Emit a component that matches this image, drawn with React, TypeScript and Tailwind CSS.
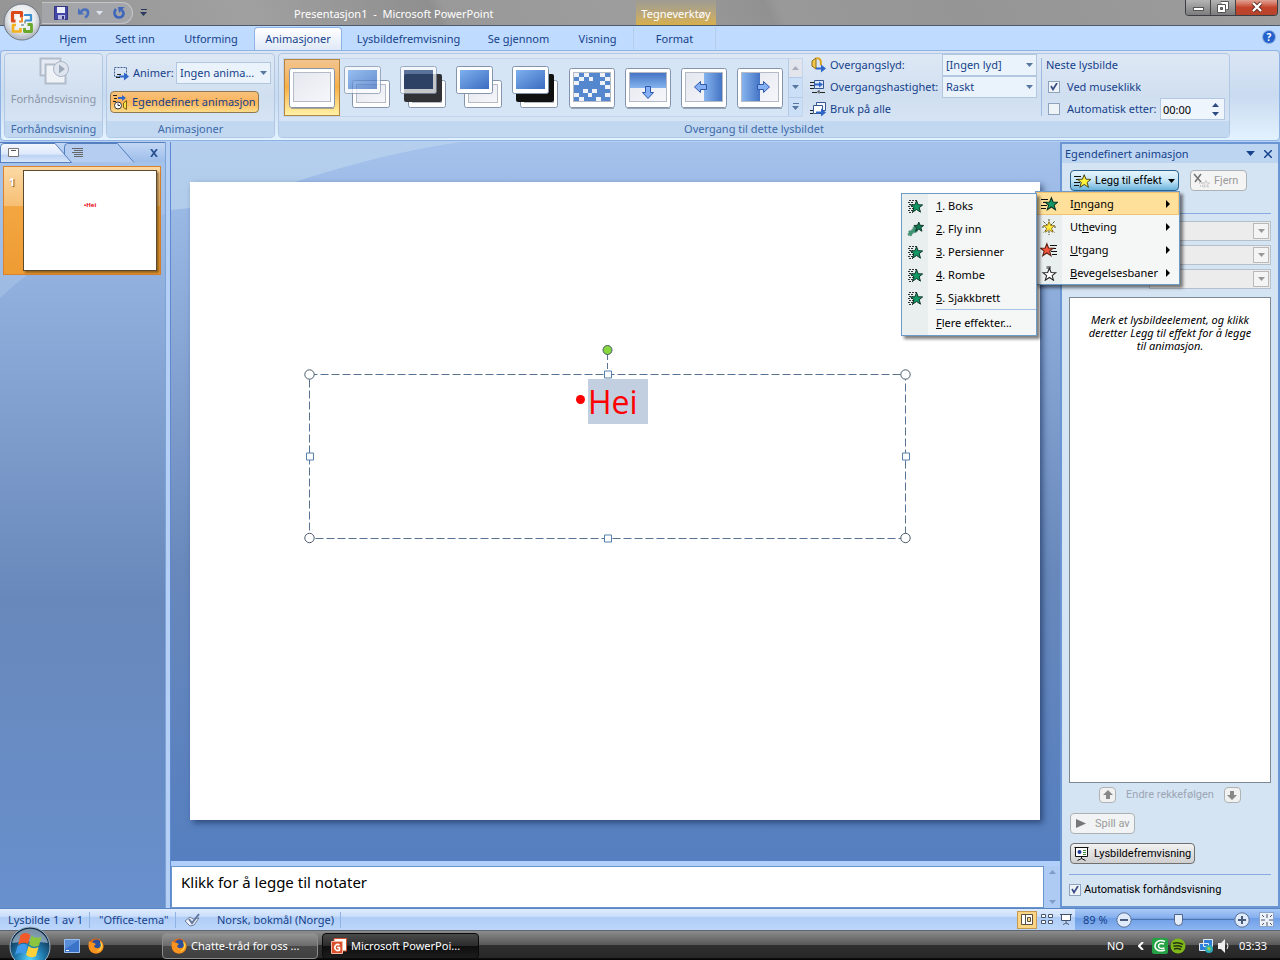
import React from 'react';

const tabs = [
  { label: 'Hjem', width: 'w-[50px]' },
  { label: 'Sett inn', width: 'w-[66px]' },
  { label: 'Utforming', width: 'w-[78px]' },
  { label: 'Animasjoner', width: 'w-[88px]', active: true },
  { label: 'Lysbildefremvisning', width: 'w-[125px]' },
  { label: 'Se gjennom', width: 'w-[87px]' },
  { label: 'Visning', width: 'w-[63px]' },
  { label: 'Format', width: 'w-[83px]', context: true },
];

const STAR = '8,0.8 10,5.8 15.4,6 11.2,9.4 12.8,14.8 8,11.6 3.2,14.8 4.8,9.4 0.6,6 6,5.8';

type IconProps = { className?: string };

function MenuStar({ kind }: { kind: string }) {
  return (
    <svg className="h-4 w-[18px] shrink-0" viewBox="0 0 18 16" aria-hidden="true">
      {(kind === 'entrance' || kind === 'add') && <path d="M1 3.5h7M3 6.5h4M1 9.5h6M1 12.5h5" stroke="#111" />}
      {kind === 'box' && (
        <path d="M3 2.500h8M2 4.500h6M3 6.500h4M2 8.500h6M3 10.500h5M2 12.500h5M3 14.500h4" stroke="#333" strokeDasharray="2 1" />
      )}
      {kind === 'entrance' && <polygon points={STAR} transform="translate(4.5 1) scale(.86)" fill="#129a66" stroke="#0c3324" strokeWidth="1.2" />}
      {kind === 'box' && <polygon points={STAR} transform="translate(4 2) scale(.82)" fill="#129a66" stroke="#0c3324" strokeWidth="1.2" />}
      {kind === 'add' && <polygon points={STAR} transform="translate(4 1) scale(.9)" fill="#fff23a" stroke="#3c3610" />}
      {kind === 'fly' && (
        <g>
          <path d="M2 14l1-4 3-1 2-4 4 2-1 4-4 1-2 3z" fill="#3c9673" stroke="#6b8f80" strokeDasharray="2 1" />
          <polygon points={STAR} transform="translate(7.5 0.5) scale(.66)" fill="#127a52" stroke="#0c3324" strokeWidth="1.4" />
        </g>
      )}
      {kind === 'emphasis' && (
        <g>
          <path d="M9 0v16M2 8h14M3.5 2.5l11 11M14.5 2.5l-11 11" stroke="#4a4a20" strokeDasharray="2 1" />
          <polygon points={STAR} transform="translate(3 2) scale(.76)" fill="#ffe93a" stroke="#8a6810" />
        </g>
      )}
      {kind === 'exit' && (
        <g>
          <path d="M10 3.5h7M12 6.5h4M11 9.5h6M12 12.5h5" stroke="#111" />
          <polygon points={STAR} transform="translate(0 1) scale(.86)" fill="#f2553a" stroke="#5b2012" strokeWidth="1.2" />
        </g>
      )}
      {kind === 'path' && (
        <g>
          <path d="M8 4V2.500h3" stroke="#888" strokeWidth="3" fill="none" />
          <polygon points={STAR} transform="translate(2.5 2.5) scale(.86)" fill="#fff" stroke="#222" strokeWidth="1.2" />
        </g>
      )}
    </svg>
  );
}

function OfficeLogo() {
  return (
    <svg className="h-full w-full" viewBox="0 0 38 38" aria-hidden="true">
      <defs>
        <radialGradient id="orb" cx=".5" cy=".4" r=".65">
          <stop offset="0" stopColor="#fff" />
          <stop offset=".55" stopColor="#e9ebee" />
          <stop offset=".85" stopColor="#b4bac3" />
          <stop offset="1" stopColor="#eef1f4" />
        </radialGradient>
      </defs>
      <circle cx="19" cy="19" r="18" fill="url(#orb)" stroke="#6c737d" />
      <g fill="none" strokeLinejoin="round">
        <path d="M12.500 18H9.500V9.500h9v5" stroke="#dc4a1c" strokeWidth="3.200" />
        <path d="M16 18.500h3v-4" stroke="#f28c2a" strokeWidth="2" />
        <path d="M22 13v-1h6v5.500h-6" stroke="#3d8fd0" strokeWidth="2.200" />
        <path d="M13 22h-3v6.500h7.500V25" stroke="#f3b11a" strokeWidth="2.600" />
        <path d="M21.500 25v3.500h7V21.500h-4" stroke="#6aa82c" strokeWidth="2.800" />
        <path d="M18 22h3M22 17.500v3" stroke="#7a9a9a" strokeWidth="1.600" />
      </g>
    </svg>
  );
}

function Thumb({ kind }: { kind: string }) {
  return (
    <svg className="h-14 w-14 shrink-0" viewBox="0 0 56 56" aria-hidden="true">
      <defs>
        <linearGradient id="tblue" x1="0" y1="0" x2="1" y2="1">
          <stop offset="0" stopColor="#7fb0ee" />
          <stop offset="1" stopColor="#3a6cc0" />
        </linearGradient>
        <linearGradient id="tgrey" x1="0" y1="0" x2="1" y2="1">
          <stop offset="0" stopColor="#e4e7ee" />
          <stop offset="1" stopColor="#f6f7fb" />
        </linearGradient>
        <linearGradient id="tdown" x1="0" y1="0" x2="0" y2="1">
          <stop offset="0" stopColor="#4474c4" />
          <stop offset="1" stopColor="#86b4ef" />
        </linearGradient>
        <linearGradient id="tright" x1="0" y1="0" x2="1" y2="0">
          <stop offset="0" stopColor="#86b4ef" />
          <stop offset="1" stopColor="#4474c4" />
        </linearGradient>
      </defs>
      {['none', 'checker', 'down', 'left', 'right'].includes(kind) ? (
        <g>
          <rect x="5.5" y="8.5" width="45" height="39" rx="2" fill="#fff" stroke="#8494ab" />
          <path d="M7 48.5h43" stroke="#5c6675" opacity=".5" />
          <rect x="9.5" y="12.5" width="37" height="29" fill="url(#tgrey)" stroke="#b4bac6" />
        </g>
      ) : (
        <g>
          <rect x="12.5" y="20.5" width="37" height="27" rx="2" fill="#fff" stroke="#8494ab" />
          <rect x="16.5" y="24.5" width="29" height="18" fill="url(#tgrey)" stroke="#b4bac6" />
          {kind === 'fadeBlack' && <rect x="8" y="14" width="38" height="28" rx="2" fill="#303236" />}
          {kind === 'cutBlack' && <rect x="8" y="14" width="38" height="28" rx="2" fill="#111" />}
          <g opacity={kind === 'fade' || kind === 'fadeBlack' ? 0.72 : 1}>
            <rect x="4.5" y="6.5" width="36" height="27" rx="2" fill="#fff" stroke="#8494ab" />
            <rect x="8" y="10" width="29" height="19" fill={kind === 'fadeBlack' ? '#2d4878' : 'url(#tblue)'} />
          </g>
        </g>
      )}
      {kind === 'checker' && (
        <g>
          <rect x="10" y="13" width="36" height="28" fill="#5587cf" />
          <path
            d="M10 13h5v4h-5zM20 13h5v4h-5zM36 13h5v4h-5zM15 17h5v4h-5zM41 17h5v4h-5zM25 17h4v4h-4zM10 21h5v4h-5zM36 21h5v4h-5zM41 25h5v4h-5zM19 29h5v4h-5zM28 29h5v4h-5zM10 33h5v4h-5zM41 33h5v4h-5zM24 33h4v4h-4zM15 37h5v4h-5zM32 37h5v4h-5z"
            fill="#eef2f8"
          />
        </g>
      )}
      {kind === 'down' && (
        <g>
          <rect x="10" y="13" width="36" height="15" fill="url(#tdown)" />
          <path d="M25.5 26.5h5v6h3l-5.5 6-5.5-6h3z" fill="#85b1f4" stroke="#2f57ad" />
        </g>
      )}
      {kind === 'left' && (
        <g>
          <rect x="28" y="13" width="18" height="28" fill="url(#tright)" />
          <path d="M30.500 24.5v5h-6v3l-6-5.500 6-5.500v3z" fill="#85b1f4" stroke="#2f57ad" />
        </g>
      )}
      {kind === 'right' && (
        <g>
          <rect x="10" y="13" width="18" height="28" fill="url(#tright)" />
          <path d="M25.500 24.5v5h6v3l6-5.500-6-5.500v3z" fill="#85b1f4" stroke="#2f57ad" />
        </g>
      )}
    </svg>
  );
}

function Firefox() {
  return (
    <svg className="h-4 w-4 shrink-0" viewBox="0 0 16 16" aria-hidden="true">
      <circle cx="8" cy="8" r="7.5" fill="#e66a10" />
      <circle cx="8.5" cy="6.500" r="5" fill="#2c4f9c" />
      <path d="M1 3c1 1 2 1.500 4 1.500l3 1.500-2 2c1 3 5 3 7 0 .5-2 0-4-1-5 3 1.500 4.500 6 2.500 9-3 5-11 4.500-13-.5C.5 9 .5 6 1 3z" fill="#f7931e" />
      <path d="M12 3c2.500 2 3 5 1.500 7.500-1 2-3 3-5 2.800 3-1.300 4.500-3 4.300-6z" fill="#ffd84a" />
    </svg>
  );
}

function Caret({ className = '' }: IconProps) {
  return (
    <svg className={`h-1 w-[7px] ${className}`} viewBox="0 0 7 4" aria-hidden="true">
      <path d="M0 0h7L3.5 4z" fill="currentColor" />
    </svg>
  );
}

function CheckBox({ checked = false }: { checked?: boolean }) {
  return (
    <span className="relative flex h-3 w-3 shrink-0">
      <input type="checkbox" defaultChecked={checked} className="peer h-3 w-3 appearance-none border border-[#8ea2bd] bg-[#eef3f8]" />
      <svg className="pointer-events-none absolute left-[2px] top-[2px] hidden h-2 w-2 peer-checked:block" viewBox="0 0 8 8" aria-hidden="true">
        <path d="M1 3l2 3.5L7 0" stroke="#3a4c86" strokeWidth="1.700" fill="none" />
      </svg>
    </span>
  );
}

function TitleBar() {
  return (
    <header className="relative flex h-[26px] shrink-0 items-center border-b border-[#4d5a6b] bg-[linear-gradient(65deg,#959595_0%,#a0a0a0_20%,#8f8f8f_34%,#999_35%,#9d9d9d_50%,#919191_60%,#999_61%,#959595_75%,#9c9c9c_100%)] pl-[42px]">
      <div className="flex h-[22px] w-[91px] shrink-0 items-center gap-[10px] rounded-r-full border border-l-0 border-[#c4c5c7] bg-[#a4a5a8] pl-3">
        <button aria-label="Lagre">
          <svg className="h-[14px] w-[14px]" viewBox="0 0 14 14">
            <path d="M.5.5h13v13H.5z" fill="#4448a8" stroke="#34357f" />
            <path d="M3 1h8v6H3z" fill="#eef0fb" />
            <path d="M4 9h7v4.500H4z" fill="#b9bce6" />
            <path d="M8 10h2v3H8z" fill="#33347c" />
          </svg>
        </button>
        <button aria-label="Angre" className="flex items-center gap-[6px]">
          <svg className="h-3 w-3" viewBox="0 0 12 12">
            <path d="M3 5c2-4 7.500-3 7 1 0 2-1 3.500-3 4.500" stroke="#4a70bd" strokeWidth="2.600" fill="none" />
            <path d="M0 1v6.500h6z" fill="#4a70bd" />
          </svg>
          <Caret className="w-[5px] text-[#dfe6f2]" />
        </button>
        <button aria-label="Gjenta">
          <svg className="h-3 w-3" viewBox="0 0 12 12">
            <path d="M3 2c-3 4-1 8.500 3 8.500 4.500 0 6-5 2.500-7.500" stroke="#3d66ba" strokeWidth="2.600" fill="none" />
            <path d="M5 0h6.500L6 6z" fill="#3d66ba" />
          </svg>
        </button>
      </div>
      <button aria-label="Tilpass" className="ml-[7px] flex flex-col items-center gap-[2px] text-[#2b3a5c]">
        <span className="h-px w-[6px] bg-[#2b3a5c]" />
        <Caret className="w-[5px]" />
      </button>
      <h1 className="ml-[147px] flex-1 pt-[2px] text-white">Presentasjon1 &nbsp;-&nbsp; Microsoft PowerPoint</h1>
      <div className="absolute left-[636px] top-0 flex h-[25px] w-20 items-center justify-center bg-linear-to-b from-[#9e9b92] via-[#b8a67a] to-[#d8b049] pt-[3px] text-white">
        Tegneverktøy
      </div>
      <div className="mb-[10px] mr-[2px] flex h-4 w-[93px] shrink-0 overflow-hidden rounded-b border border-t-0 border-[#3b3f45]">
        <button aria-label="Minimer" className="flex w-[25px] items-center justify-center border-r border-[#444] bg-linear-to-b from-[#b4b4b4] to-[#7c7c7c]">
          <span className="mt-1 h-[4px] w-[11px] border border-[#555] bg-white" />
        </button>
        <button aria-label="Gjenopprett" className="flex w-[25px] items-center justify-center border-r border-[#444] bg-linear-to-b from-[#b4b4b4] to-[#7c7c7c]">
          <svg className="h-3 w-3" viewBox="0 0 12 12">
            <path d="M3.5.5h8v8h-2M.5 3.5h8v8h-8z" fill="#fff" stroke="#555" />
            <path d="M3.5 6.500h2v2h-2z" fill="#777" stroke="#555" />
          </svg>
        </button>
        <button aria-label="Lukk" className="flex flex-1 items-center justify-center bg-linear-to-b from-[#e0a294] via-[#c4432a] to-[#b4442c]">
          <svg className="h-3 w-3" viewBox="0 0 12 12">
            <path d="M2 2l8 8M10 2l-8 8" stroke="#5c2a20" strokeWidth="4" />
            <path d="M2 2l8 8M10 2l-8 8" stroke="#fff" strokeWidth="2.400" />
          </svg>
        </button>
      </div>
      <button aria-label="Office-knapp" className="absolute left-[3px] top-[3px] z-10 h-[38px] w-[38px]">
        <OfficeLogo />
      </button>
    </header>
  );
}

function TabRow() {
  return (
    <nav className="flex h-6 shrink-0 items-end gap-1 bg-[#bfdbff] pl-12 pr-1 text-[#15428b]">
      {tabs.map((tab) => (
        <button
          key={tab.label}
          className={`${tab.width} h-[23px] shrink-0 ${
            tab.active ? 'z-10 rounded-t border border-b-0 border-[#8db2e3] bg-linear-to-b from-white to-[#dfe9f7]' : ''
          } ${tab.context ? 'border-x border-[#b4cdea]' : ''}`}
        >
          {tab.label}
        </button>
      ))}
      <button aria-label="Hjelp" className="mb-[7px] ml-auto mr-px flex h-3 w-3 items-center justify-center rounded-full bg-[#2461cc] text-[10px] font-bold text-white ring-1 ring-[#8aaee0]">
        ?
      </button>
    </nav>
  );
}

function Group({ label, className, children }: { label: string; className: string; children: React.ReactNode }) {
  return (
    <section className={`flex shrink-0 flex-col overflow-hidden rounded-sm border border-[#b0c8e4] bg-linear-to-b from-[#dee8f5] via-[#d0dff0] to-[#d9e7f8] ${className}`}>
      <div className="min-h-0 flex-1">{children}</div>
      <h2 className="h-4 bg-[#c1d8f0] text-center leading-4 text-[#3e6aaa]">{label}</h2>
    </section>
  );
}

function RibbonSelect({ label, value, className }: { label: string; value: string; className: string }) {
  return (
    <span className={`relative flex h-[22px] items-center ${className}`}>
      <select aria-label={label} className="h-full w-full appearance-none border border-[#b3c7e1] bg-[#eaf2fb] pl-[3px] text-[#15428b]">
        <option>{value}</option>
      </select>
      <Caret className="pointer-events-none absolute right-1 w-[5px] text-[#5577a0]" />
    </span>
  );
}

function ArrowPageIcon({ kind }: { kind: string }) {
  return (
    <svg className="h-4 w-4 shrink-0" viewBox="0 0 16 16" aria-hidden="true">
      {kind === 'animate' && <path d="M1.5 2.5h12v9h-12z" fill="none" stroke="#3c5f94" strokeDasharray="2 1" />}
      {kind === 'sound' && (
        <g>
          <path d="M2 4l4-3v11L2 9z" fill="#f2c94c" stroke="#8a6a14" />
          <path d="M6 1.500c4-1 5 1 5 7" fill="none" stroke="#e0a520" strokeWidth="2" />
        </g>
      )}
      {kind === 'speed' && (
        <g>
          <path d="M4.5 1.5h9v8h-9z" fill="#dce8f8" stroke="#34588f" />
          <path d="M0 3.5h4M0 6.500h4M0 9.500h4M2 13.5h5l2-2v3M10 13.5h5" stroke="#222" fill="none" />
        </g>
      )}
      {kind === 'all' && (
        <g>
          <path d="M6.500 1.500h9v8h-9z" fill="#f2f6fc" stroke="#34588f" />
          <path d="M3.500 4.500h9v8h-9z" fill="#fff" stroke="#34588f" />
          <path d="M0 9.500h3M0 12.500h3" stroke="#222" />
        </g>
      )}
      {kind === 'speed' ? (
        <path d="M5 4.500h4v-2l4 3-4 3v-2H5z" fill="#2f66c8" />
      ) : (
        <path d="M6 10.500h5v-3l5 4-5 4v-3H6z" fill="#2f66c8" />
      )}
      {kind === 'animate' && <path d="M4 9.500h4M3 12.500h4" stroke="#222" />}
    </svg>
  );
}

const transitions = ['none', 'fade', 'fadeBlack', 'cut', 'cutBlack', 'checker', 'down', 'left', 'right'];

function Ribbon() {
  return (
    <div className="flex h-[91px] shrink-0 gap-[3px] rounded border border-[#8db2e3] bg-linear-to-b from-[#dbe6f4] via-[#c9dbf0] to-[#e3f2ff] px-[3px] py-[2px] text-[#15428b]">
      <Group label="Forhåndsvisning" className="w-[99px]">
        <button disabled className="flex h-full w-full flex-col items-center pt-[2px] text-[#8d96a8]">
          <svg className="h-8 w-8" viewBox="0 0 32 32" aria-hidden="true">
            <path d="M2.500 2.500h20v17h-20z" fill="#e6ebf3" stroke="#b2bccb" strokeWidth="2" />
            <path d="M7.500 8.500h20v19h-20z" fill="#eff2f7" stroke="#b2bccb" strokeWidth="2" />
            <circle cx="23" cy="13" r="7.500" fill="#dfe5ee" stroke="#aab4c4" />
            <path d="M21 8.500v9l6-4.500z" fill="#9ea9ba" />
          </svg>
          <span className="mt-[3px]">Forhåndsvisning</span>
        </button>
      </Group>
      <Group label="Animasjoner" className="w-[169px]">
        <div className="flex flex-col gap-[7px] px-[3px] pt-[8px]">
          <div className="flex items-center">
            <span className="ml-[3px]"><ArrowPageIcon kind="animate" /></span>
            <span className="ml-[4px] flex-1">Animer:</span>
            <RibbonSelect label="Animer" value="Ingen anima..." className="w-[95px]" />
          </div>
          <button className="flex h-[22px] w-[149px] items-center gap-[3px] rounded-sm border border-[#8e7a52] bg-linear-to-b from-[#f7c27c] via-[#fcb45a] to-[#fddb87] px-[2px] whitespace-nowrap">
            <svg className="h-4 w-4 shrink-0" viewBox="0 0 16 16" aria-hidden="true">
              <path d="M0 1.500h4M1 4.500h3M0 7.500h3" stroke="#222" />
              <path d="M5 3h4V1l4 3-4 3V5H5z" fill="#2f66c8" />
              <circle cx="5" cy="11.500" r="3.500" fill="#fff" stroke="#333" />
              <path d="M5 9.500v2h2" stroke="#333" fill="none" />
              <path d="M10.500 9l3-2.500v9l-3-2z" fill="#ffe04a" stroke="#7c6410" />
            </svg>
            Egendefinert animasjon
          </button>
        </div>
      </Group>
      <Group label="Overgang til dette lysbildet" className="w-[952px]">
        <div className="flex h-full pl-[4px] pt-[4px]">
          <div className="flex h-[59px] border border-[#c2d5ec] bg-[#d6e5f6]">
            {transitions.map((kind) => (
              <button
                key={kind}
                aria-label={kind}
                className={`flex h-[57px] w-14 items-center justify-center ${
                  kind === 'none' ? 'border border-[#b48640] bg-linear-to-b from-[#f3c48e] via-[#f8b045] to-[#fff2a4]' : ''
                }`}
              >
                <Thumb kind={kind} />
              </button>
            ))}
            <div className="flex w-[14px] flex-col border-l border-[#b3c9e6] text-[#5577a0]">
              <button aria-label="Opp" className="flex flex-1 items-center justify-center bg-[#e2e6ec] text-[#aab]"><Caret className="w-[5px] rotate-180" /></button>
              <button aria-label="Ned" className="flex flex-1 items-center justify-center border-y border-[#b3c9e6] bg-[#cbdff7]"><Caret className="w-[5px]" /></button>
              <button aria-label="Mer" className="flex flex-1 flex-col items-center justify-center gap-[2px] bg-[#cbdff7]"><span className="h-px w-[6px] bg-[#5577a0]" /><Caret className="w-[5px]" /></button>
            </div>
          </div>
          <div className="-mt-[4px] ml-[7px] flex w-[132px] flex-col whitespace-nowrap">
            <span className="flex h-[22px] items-center gap-1"><ArrowPageIcon kind="sound" />Overgangslyd:</span>
            <span className="flex h-[22px] items-center gap-1"><ArrowPageIcon kind="speed" />Overgangshastighet:</span>
            <button className="flex h-[22px] items-center gap-1"><ArrowPageIcon kind="all" />Bruk på alle</button>
          </div>
          <div className="-mt-[4px] w-[95px]">
            <RibbonSelect label="Overgangslyd" value="[Ingen lyd]" className="w-full" />
            <RibbonSelect label="Overgangshastighet" value="Raskt" className="w-full" />
          </div>
          <div className="ml-1 h-[58px] w-px bg-[#9dbbe0]" />
          <div className="-mt-[4px] ml-[4px] flex flex-1 flex-col">
            <span className="flex h-[22px] items-center">Neste lysbilde</span>
            <label className="flex h-[22px] items-center gap-[7px] pl-[2px]">
              <CheckBox checked />
              Ved museklikk
            </label>
            <div className="flex h-[22px] items-center">
              <label className="flex items-center gap-[7px] pl-[2px] whitespace-nowrap">
                <CheckBox />
                Automatisk etter:
              </label>
              <span className="relative ml-auto mr-[4px] h-[22px] w-[65px]">
                <input aria-label="Tid" defaultValue="00:00" className="h-full w-full border border-[#b3c7e1] bg-[#eff5fc] pl-[2px] text-black" />
                <span className="absolute right-[6px] top-[5px] flex flex-col gap-[5px] text-[#2b4a80]">
                  <Caret className="w-[5px] rotate-180" />
                  <Caret className="w-[5px]" />
                </span>
              </span>
            </div>
          </div>
        </div>
      </Group>
    </div>
  );
}

function SlidePanel() {
  return (
    <aside className="relative flex w-[166px] shrink-0 flex-col border-r border-[#7ba3d8] bg-linear-to-b from-[#a4c2ec] via-[#6888bb] via-60% to-[#6890cd]">
      <svg className="absolute left-0 top-0 h-40 w-[165px]" viewBox="0 0 165 160" aria-hidden="true">
        <path d="M0 0h165v72Q60 98 0 156z" fill="#a9c4e9" opacity=".55" />
      </svg>
      <div className="relative flex h-5 items-center border-t border-[#5580c0] bg-linear-to-b from-[#c3d7f4] to-[#9dbdea]">
        <svg className="absolute inset-0 h-5 w-[140px]" viewBox="0 0 140 20" aria-hidden="true">
          <defs>
            <linearGradient id="paneTab" x1="0" y1="0" x2="0" y2="1">
              <stop offset="0" stopColor="#f4f8fe" />
              <stop offset=".55" stopColor="#dce8fa" />
              <stop offset=".6" stopColor="#bcd2f3" />
              <stop offset="1" stopColor="#dbe8fb" />
            </linearGradient>
          </defs>
          <path d="M64.500 19V4q0-3.500 3-3.500h50L134 19.500" fill="#b4cdf0" stroke="#5580c0" />
          <path d="M.5 20V4Q.5.5 4 .5h51L71.500 19.500H0" fill="url(#paneTab)" stroke="#5580c0" />
          <path d="M8.500 5.500h10v8h-10z" fill="#fff" stroke="#777" />
          <path d="M11 7.500h5" stroke="#555" />
          <path d="M72 5.500h11M74 7.500h9M72 9.500h11M74 11.500h9M74 13.500h9" stroke="#666" />
        </svg>
        <button aria-label="Lukk rute" className="ml-auto mr-[7px]">
          <svg className="h-2 w-2" viewBox="0 0 8 8"><path d="M1 0l6 8M7 0L1 8" stroke="#2a5392" strokeWidth="1.800" /></svg>
        </button>
      </div>
      <div className="relative mt-[4px] ml-[3px] flex h-[109px] w-[158px] gap-[4px] border border-[#d98230] bg-[linear-gradient(#fbd9a4,#f7bf74_36%,#f3a640_37%,#ee9c34)] p-[3px]">
        <span className="w-[12px] pt-[4px] pr-[4px] text-right leading-4 font-bold text-white [text-shadow:1px_1px_1px_#7a5a28]">1</span>
        <div className="relative flex-1 border border-[#5c4a30] bg-white shadow-[2px_2px_2px_rgba(90,60,10,0.6)]">
          <span className="absolute left-[60px] top-[29px] text-[6px] leading-[10px] font-bold text-red-600">•Hei</span>
        </div>
      </div>
    </aside>
  );
}

function Handles() {
  return (
    <svg className="pointer-events-none absolute -left-[6px] -top-[30px] h-[200px] w-[608px]" viewBox="0 0 608 200" aria-hidden="true">
      <path d="M6.5 30.5h596v164h-596z" fill="none" stroke="#5a7392" strokeDasharray="8 3" />
      <path d="M304.5 10v16" stroke="#5a7392" strokeDasharray="6 3" />
      <circle cx="304.5" cy="6" r="4.5" fill="#86d83c" stroke="#4a5a6c" />
      <g fill="#fff" stroke="#4a5a6c">
        <circle cx="6.5" cy="30.5" r="4.700" />
        <circle cx="602.5" cy="30.5" r="4.700" />
        <circle cx="6.5" cy="194" r="4.700" />
        <circle cx="602.5" cy="194" r="4.700" />
      </g>
      <path d="M301.500 27h7v7h-7zM301.500 191h7v7h-7zM3.500 109h7v7h-7zM599.500 109h7v7h-7z" fill="#fff" stroke="#5580ae" />
    </svg>
  );
}

function Workspace() {
  return (
    <main className="ml-[4px] flex min-w-0 flex-1 flex-col border-l border-[#5c8ad0]">
      <div className="relative flex flex-1 flex-col bg-linear-to-b from-[#a4c2ec] via-[#6888bb] via-60% to-[#557fc0] pt-[40px] pr-5 pb-[41px] pl-[19px]">
        <svg className="absolute left-0 top-0 h-20 w-[300px]" viewBox="0 0 300 80" aria-hidden="true">
          <path d="M0 0h290Q190 14 60 62L0 68z" fill="#bfd5f0" opacity=".65" />
        </svg>
        <div className="relative flex-1 bg-white shadow-[3px_3px_6px_rgba(20,40,80,0.6)]">
          <div className="absolute left-[119px] top-[192px] h-[164px] w-[596px]">
            <p className="flex items-center pl-[267px] pt-[5px] font-['Open_Sans',sans-serif] text-[32px] leading-[45px] text-[#f00]">
              <span className="mr-[3px] mb-1 h-[9px] w-[9px] rounded-full bg-[#f00]" />
              <span className="h-[45px] w-[60px] bg-[#c2cfe0]">Hei</span>
            </p>
            <Handles />
          </div>
        </div>
      </div>
      <div className="flex h-[47px] shrink-0 border-t-[5px] border-[#b0cffa] bg-[#aecbf4]">
        <textarea aria-label="Notater" defaultValue="Klikk for å legge til notater" className="h-[42px] flex-1 resize-none border border-[#6a94cc] bg-white pl-[9px] pt-[5px] text-[15px] leading-5 text-black" />
        <div className="flex w-4 flex-col justify-between py-1 text-[#7f9cc8]">
          <Caret className="mx-auto rotate-180" />
          <Caret className="mx-auto" />
        </div>
      </div>
    </main>
  );
}

const effectKinds = [
  { label: 'Inngang', key: 1, icon: 'entrance', active: true },
  { label: 'Utheving', key: 2, icon: 'emphasis' },
  { label: 'Utgang', key: 0, icon: 'exit' },
  { label: 'Bevegelsesbaner', key: 0, icon: 'path' },
];

const entranceEffects = [
  { label: '1. Boks', icon: 'box' },
  { label: '2. Fly inn', icon: 'fly' },
  { label: '3. Persienner', icon: 'box' },
  { label: '4. Rombe', icon: 'box' },
  { label: '5. Sjakkbrett', icon: 'box' },
];

function MenuLabel({ text, at }: { text: string; at: number }) {
  return (
    <span>
      {text.slice(0, at)}
      <u>{text[at]}</u>
      {text.slice(at + 1)}
    </span>
  );
}

function EffectMenu() {
  return (
    <div className="absolute -left-[35px] top-[21px] z-20 w-[145px] border border-[#6f9bc8] bg-[linear-gradient(90deg,#e9eeee_26px,#f5f6f6_26px)] font-['Noto_Sans',sans-serif] text-black shadow-[3px_3px_3px_rgba(0,0,0,0.5)]">
      {effectKinds.map((item) => (
        <button
          key={item.label}
          className={`flex h-[23px] w-full items-center border px-[3px] text-left ${item.active ? 'border-[#f0c274] bg-[#ffe09a]' : 'border-transparent'}`}
        >
          <MenuStar kind={item.icon} />
          <span className="ml-3 flex-1 whitespace-nowrap"><MenuLabel text={item.label} at={item.key} /></span>
          <svg className="mr-[5px] h-2 w-1" viewBox="0 0 4 8" aria-hidden="true"><path d="M0 0l4 4-4 4z" /></svg>
        </button>
      ))}
      <div className="absolute right-[142px] top-px w-[136px] border border-[#6f9bc8] bg-[linear-gradient(90deg,#e9eeee_26px,#f5f6f6_26px)] shadow-[3px_3px_3px_rgba(0,0,0,0.5)]">
        {entranceEffects.map((item) => (
          <button key={item.label} className="flex h-[23px] w-full items-center pl-1 text-left">
            <MenuStar kind={item.icon} />
            <span className="ml-3"><MenuLabel text={item.label} at={0} /></span>
          </button>
        ))}
        <button className="ml-[34px] flex h-[26px] w-[100px] items-center border-t border-[#a9c3e8] text-left">
          <MenuLabel text="Flere effekter..." at={0} />
        </button>
      </div>
    </div>
  );
}

function FieldSelect({ label }: { label: string }) {
  return (
    <span className="relative flex h-5 items-center">
      <select aria-label={label} disabled className="h-full w-full appearance-none border border-[#b5bfcc] bg-[#ececec]" />
      <span className="pointer-events-none absolute right-[2px] flex h-4 w-4 items-center justify-center border border-[#b9b9b9] bg-[#f4f4f4] text-[#999]">
        <Caret />
      </span>
    </span>
  );
}

function AnimationPane() {
  return (
    <aside className="flex w-[220px] shrink-0 flex-col border-2 border-[#6a96d4] bg-[#d5e4f2] text-black">
      <div className="flex h-[19px] shrink-0 items-center bg-[#bed5f1] pl-[3px] pr-[6px] text-[#15428b]">
        <h2 className="flex-1">Egendefinert animasjon</h2>
        <button aria-label="Meny"><Caret className="h-[5px] w-[9px]" /></button>
        <button aria-label="Lukk" className="ml-[9px]">
          <svg className="h-2 w-2" viewBox="0 0 8 8"><path d="M0 0l8 8M8 0L0 8" stroke="#15428b" strokeWidth="1.500" /></svg>
        </button>
      </div>
      <div className="flex min-h-0 flex-1 flex-col px-[7px] pt-[7px] font-['Roboto',sans-serif]">
        <div className="relative ml-px flex gap-[11px]">
          <button className="flex h-[21px] w-[109px] items-center rounded-sm border border-[#2c628b] bg-linear-to-b from-[#e5f4fc] via-[#c4e5f6] to-[#68b3db] pl-[2px] whitespace-nowrap">
            <MenuStar kind="add" />
            <span className="ml-1 flex-1 text-left">Legg til effekt</span>
            <Caret className="mr-[3px]" />
          </button>
          <button disabled className="flex h-[21px] w-[57px] items-center gap-[4px] rounded-sm border border-[#adb2b5] bg-[#f4f4f4] pl-[2px] text-[#9a9a9a]">
            <svg className="h-4 w-[17px]" viewBox="0 0 17 16" aria-hidden="true">
              <path d="M1 1l7 8M8 1L2 9" stroke="#777" strokeWidth="1.600" />
              <path d="M6 10h4M7 13h4" stroke="#aaa" strokeDasharray="1 1" />
              <polygon points={STAR} transform="translate(9 7) scale(.5)" fill="#eee" stroke="#aaa" />
            </svg>
            Fjern
          </button>
          <EffectMenu />
        </div>
        <div className="mt-[22px] mb-[7px] h-px bg-[#8aaadf]" />
        <div className="flex flex-col gap-1">
          <FieldSelect label="Start" />
          <FieldSelect label="Egenskap" />
          <div className="ml-20"><FieldSelect label="Hastighet" /></div>
        </div>
        <div className="mt-2 flex-1 border border-[#7d8794] bg-white px-4 pt-[15px] text-center font-['Noto_Sans',sans-serif] leading-[13px] italic">
          Merk et lysbildeelement, og klikk deretter Legg til effekt for å legge til animasjon.
        </div>
        <div className="mt-1 flex h-4 items-center justify-center gap-[10px] text-[#9ba6b5]">
          <button aria-label="Flytt opp" disabled className="flex h-4 w-[17px] items-center justify-center rounded-sm border border-[#adb2b5] bg-[#f1f1f1]">
            <svg className="h-[10px] w-[10px]" viewBox="0 0 10 10"><path d="M5 0l5 5H7v4H3V5H0z" fill="#888" /></svg>
          </button>
          Endre rekkefølgen
          <button aria-label="Flytt ned" disabled className="flex h-4 w-[17px] items-center justify-center rounded-sm border border-[#adb2b5] bg-[#f1f1f1]">
            <svg className="h-[10px] w-[10px]" viewBox="0 0 10 10"><path d="M5 10l5-5H7V1H3v4H0z" fill="#888" /></svg>
          </button>
        </div>
        <button disabled className="mt-[10px] ml-px flex h-[21px] w-[65px] items-center gap-[9px] rounded-sm border border-[#adb2b5] bg-[#f1f3f4] pl-[5px] whitespace-nowrap text-[#9a9a9a]">
          <svg className="h-[9px] w-[10px]" viewBox="0 0 10 9" aria-hidden="true"><path d="M0 0l10 4.500L0 9z" fill="#777" /></svg>
          Spill av
        </button>
        <button className="mt-[9px] ml-px flex h-[21px] w-[125px] items-center gap-[5px] rounded-sm border border-[#707070] bg-linear-to-b from-[#f2f2f2] to-[#cfcfcf] pl-[3px] whitespace-nowrap">
          <svg className="h-[15px] w-[15px] shrink-0" viewBox="0 0 15 15" aria-hidden="true">
            <path d="M.5 1.500h14M1.500 2v8.500h12V2M7.500 10.500v2l-4 2M7.500 12.500l4 2" fill="#fff" stroke="#111" />
            <circle cx="5.500" cy="6" r="2" fill="#223a9a" />
            <path d="M9 4.500h3M9 6.500h3M9 8.500h3" stroke="#3a8a3a" />
          </svg>
          Lysbildefremvisning
        </button>
        <div className="mt-[10px] mb-[9px] h-px bg-[#8aaadf]" />
        <label className="mb-[10px] flex h-3 items-center gap-[3px] whitespace-nowrap">
          <CheckBox checked />
          Automatisk forhåndsvisning
        </label>
      </div>
    </aside>
  );
}

function ZoomKnob({ plus = false }: { plus?: boolean }) {
  return (
    <svg className="h-4 w-4" viewBox="0 0 16 16" aria-hidden="true">
      <circle cx="8" cy="8" r="7.200" fill="#dfeafa" stroke="#5b7199" />
      <path d={plus ? 'M4 8h8M8 4v8' : 'M4 8h8'} stroke="#4a5c7c" strokeWidth="2" />
    </svg>
  );
}

function StatusBar() {
  return (
    <footer className="flex h-[22px] shrink-0 items-center border-t border-[#5b86c4] bg-[linear-gradient(#e0ecfd,#cadefb_35%,#b0cdf6_40%,#bdd7fb)] text-[#15428b]">
      <span className="w-[90px] border-r border-[#8fb3e4] pl-2 whitespace-nowrap">Lysbilde 1 av 1</span>
      <span className="w-[86px] border-r border-[#8fb3e4] pl-[9px] whitespace-nowrap">"Office-tema"</span>
      <svg className="ml-2 h-4 w-[17px]" viewBox="0 0 17 16" aria-hidden="true">
        <path d="M1 9l5-4 3 2 6-1-5 7-4 1z" fill="#eef2f8" stroke="#6d7f9c" />
        <path d="M5 7l3 4 7-9" fill="none" stroke="#6478a0" strokeWidth="2" />
      </svg>
      <span className="ml-4 w-[124px] border-r border-[#8fb3e4] whitespace-nowrap">Norsk, bokmål (Norge)</span>
      <div className="ml-auto flex h-full items-center pl-px">
        <div className="flex h-full items-center">
          <button aria-label="Normal" className="flex h-[18px] w-5 items-center justify-center border border-[#c69a4c] bg-[#fbd583]">
            <svg className="h-[11px] w-3" viewBox="0 0 12 11"><path d="M.5.5h11v10H.5zM4.500.5v10M6.500 7.500h3v-4h-3z" fill="#fff" stroke="#5b5140" /></svg>
          </button>
          <button aria-label="Lysbildesortering" className="flex w-[19px] justify-center">
            <svg className="h-[11px] w-3" viewBox="0 0 12 11"><path d="M.5.5h4v3h-4zM7.500.5h4v3h-4zM.5 6.500h4v3h-4zM7.500 6.500h4v3h-4z" fill="#fff" stroke="#44546e" /></svg>
          </button>
          <button aria-label="Fremvisning" className="flex w-[19px] justify-center">
            <svg className="h-[11px] w-3" viewBox="0 0 12 11"><path d="M0 .5h12M1.500 1v5.500h9V1M6 7v2l-3 1.500M6 9l3 1.500" fill="#fff" stroke="#44546e" /></svg>
          </button>
        </div>
        <div className="flex h-full items-center bg-[linear-gradient(#a9c9f6,#86b0ee_40%,#6f9fe6_45%,#8db6f2)] pr-[6px]">
          <span className="ml-2 w-[33px] whitespace-nowrap">89 %</span>
          <button aria-label="Zoom ut"><ZoomKnob /></button>
          <input
            type="range"
            aria-label="Zoom"
            defaultValue={45}
            className="h-4 w-[102px] appearance-none bg-[linear-gradient(#4d74ac,#4d74ac)] bg-[length:100%_1px] bg-center bg-no-repeat [&::-webkit-slider-thumb]:h-3 [&::-webkit-slider-thumb]:w-[9px] [&::-webkit-slider-thumb]:appearance-none [&::-webkit-slider-thumb]:rounded-b-full [&::-webkit-slider-thumb]:border [&::-webkit-slider-thumb]:border-[#51658a] [&::-webkit-slider-thumb]:bg-[#e6eefa]"
          />
          <button aria-label="Zoom inn"><ZoomKnob plus /></button>
          <button aria-label="Tilpass til vindu" className="ml-[9px] flex h-[15px] w-[15px] items-center justify-center border border-[#8aa4cc] bg-[#eef3fa]">
            <svg className="h-3 w-3" viewBox="0 0 12 12">
              <path d="M6 0v4M6 8v4M0 6h4M8 6h4M1 1l2 2M11 1L9 3M1 11l2-2M11 11l-2-2" stroke="#44546e" />
            </svg>
          </button>
        </div>
      </div>
    </footer>
  );
}

function Taskbar() {
  return (
    <div className="relative flex h-[30px] shrink-0 items-center border-t border-[#5c6470] bg-[linear-gradient(#8c8c8c,#585858_48%,#303030_50%,#262626_92%,#050505_96%)] pl-16 pr-[13px] text-white">
      <button aria-label="Start" className="absolute -top-[5px] left-[8px] h-[34px] w-[44px] overflow-hidden">
        <svg className="h-[44px] w-[44px]" viewBox="0 0 44 44">
          <defs>
            <radialGradient id="start" cx=".5" cy=".8" r=".7">
              <stop offset="0" stopColor="#54d4fe" />
              <stop offset=".5" stopColor="#1f78ac" />
              <stop offset="1" stopColor="#0e2c48" />
            </radialGradient>
          </defs>
          <circle cx="22" cy="21" r="20" fill="url(#start)" stroke="#9db3c4" />
          <path d="M4 17a18.500 18.500 0 0 1 36 0q-18-3-36 0z" fill="#c6d6e2" opacity=".6" />
          <path d="M12.500 9q5-4 10 0l-2.500 9q-5-3-10 1z" fill="#f0592a" />
          <path d="M23.500 9.500q5 4 10 1l-2.500 9q-5 3-10-1z" fill="#8cc63e" />
          <path d="M9.500 20q5-4 10-1l-2.500 9q-5-3-10 1z" fill="#3f9bea" />
          <path d="M20.500 20q5 4 10 1l-2.500 9q-5 3-10-1z" fill="#ffd13a" />
        </svg>
      </button>
      <button aria-label="Vis skrivebord">
        <svg className="h-[14px] w-4" viewBox="0 0 16 14"><path d="M.5.5h15v13H.5z" fill="#3b73c9" stroke="#9cc0ee" /><path d="M2 11h3v1H2z" fill="#fff" /><path d="M1 1h14L1 10z" fill="#6ea2e6" opacity=".6" /></svg>
      </button>
      <button aria-label="Firefox" className="ml-2"><Firefox /></button>
      <button className="ml-[58px] flex h-[26px] w-[156px] items-center gap-[4px] rounded border border-[#8c8c8c] bg-[linear-gradient(#939393,#6c6c6c_48%,#484848_50%,#404040)] px-2 whitespace-nowrap">
        <Firefox />
        Chatte-tråd for oss ...
      </button>
      <button className="ml-1 flex h-[26px] w-[157px] items-center gap-[4px] rounded border border-[#0a0a0a] bg-[linear-gradient(#4a4a4a,#2c2c2c_48%,#0e0e0e_50%,#1c1c1c)] px-2 whitespace-nowrap">
        <svg className="h-4 w-4 shrink-0" viewBox="0 0 16 16" aria-hidden="true">
          <path d="M3 .5h12.500V13H3z" fill="#fff" stroke="#d2502c" />
          <path d="M.5 3.500h11v12H.5z" fill="#d9502c" stroke="#f6b8a4" />
          <path d="M8.500 7a3 3 0 1 0 0 5V9.500H6" fill="none" stroke="#fff" strokeWidth="1.600" />
        </svg>
        Microsoft PowerPoi...
      </button>
      <span className="ml-auto">NO</span>
      <svg className="ml-[14px] h-2 w-[6px]" viewBox="0 0 6 8" aria-hidden="true"><path d="M5 0L1 4l4 4" fill="none" stroke="#fff" strokeWidth="2" /></svg>
      <svg className="ml-2 h-4 w-4" viewBox="0 0 16 16" aria-hidden="true">
        <rect width="16" height="16" rx="2" fill="#25a244" />
        <path d="M13 3.500C7 1 3 4 3 8s4 6 10 4M12 6C8 5 6.500 6 6.500 8s2 3 6 2" stroke="#fff" strokeWidth="1.500" fill="none" />
      </svg>
      <svg className="ml-[2px] h-4 w-4" viewBox="0 0 16 16" aria-hidden="true">
        <circle cx="8" cy="8" r="7.500" fill="#7fb81a" />
        <path d="M3 5.500q5-2 10 .8M3.500 8.300q4.500-1.500 8.500.8M4 11q4-1.200 7 .7" stroke="#26330c" strokeWidth="1.500" fill="none" />
      </svg>
      <svg className="ml-3 h-4 w-4" viewBox="0 0 16 16" aria-hidden="true">
        <path d="M5.500 1.500h9v7h-9zM1.500 5.500h9v7h-9z" fill="#2f7fd8" stroke="#dfe9f5" />
        <circle cx="11" cy="11" r="4" fill="#2fa9b8" />
        <path d="M9 10q2-3 4 1l-2 2z" fill="#8ed04a" />
      </svg>
      <svg className="ml-1 h-4 w-3" viewBox="0 0 12 16" aria-hidden="true">
        <path d="M0 5h3l4-4v14l-4-4H0z" fill="#eee" />
        <path d="M9 5q2 3 0 6" stroke="#eee" fill="none" />
      </svg>
      <time className="ml-[9px]">03:33</time>
    </div>
  );
}

export default function App() {
  return (
    <div className="flex h-screen flex-col overflow-hidden bg-[#b5d0f4] font-['Noto_Sans',sans-serif] text-[11px] leading-4">
      <TitleBar />
      <TabRow />
      <Ribbon />
      <div className="mt-px flex min-h-0 flex-1">
        <SlidePanel />
        <Workspace />
        <AnimationPane />
      </div>
      <StatusBar />
      <Taskbar />
    </div>
  );
}
